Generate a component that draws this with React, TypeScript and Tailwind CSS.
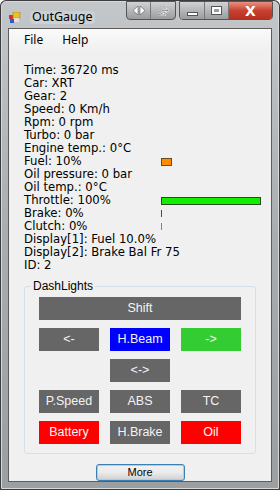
import React from "react";

const lines = [
  "Time: 36720 ms",
  "Car: XRT",
  "Gear: 2",
  "Speed: 0 Km/h",
  "Rpm: 0 rpm",
  "Turbo: 0 bar",
  "Engine temp.: 0°C",
  "Fuel: 10%",
  "Oil pressure: 0 bar",
  "Oil temp.: 0°C",
  "Throttle: 100%",
  "Brake: 0%",
  "Clutch: 0%",
  "Display[1]: Fuel 10.0%",
  "Display[2]: Brake Bal Fr 75",
  "ID: 2",
];

function Light({ label, color, className = "" }: { label: string; color: string; className?: string }) {
  return (
    <div
      className={`h-[23px] flex items-center justify-center text-[12.5px] text-[#f4f4f4] ${color} ${className}`}
      style={{ fontFamily: '"Liberation Sans", Arial, sans-serif' }}
    >
      {label}
    </div>
  );
}

function Bar({ i }: { i: number }) {
  if (i === 7) return <div className="w-[11px] h-[8px] bg-[#ff8c00] border border-[#6a4a20]" />;
  if (i === 10) return <div className="w-[100px] h-[8px] bg-[#11ee00] border border-[#2a4a2a]" />;
  if (i === 11) return <div className="w-[1px] h-[7px] bg-[#d01010]" />;
  if (i === 12) return <div className="w-[1px] h-[7px] bg-[#40a0a0]" />;
  return null;
}

export default function App() {
  return (
    <div className="w-[280px] h-[490px] bg-[#3c3c3c] p-px rounded-t-[6px]">
      <div className="w-full h-full flex flex-col bg-gradient-to-b from-[#c4c7ca] via-[#a9acaf] to-[#9c9fa2] rounded-t-[5px] border border-[#d8d8d8]">
        {/* title bar */}
        <div className="h-[26px] flex items-start relative">
          <div className="flex items-center mt-[9px] ml-[7px]">
            <svg width="12" height="11" viewBox="0 0 12 11">
              <rect x="0" y="3" width="4" height="4" fill="#d83030" />
              <rect x="4" y="0" width="7" height="6" fill="#f0c020" stroke="#b08010" strokeWidth="0.6" />
              <rect x="1" y="7" width="4" height="4" fill="#2060d0" />
              <rect x="5" y="6" width="5" height="4" fill="#e0e0e0" />
            </svg>
            <span
              className="ml-[9px] text-[12.5px] text-black leading-none px-[2px] bg-[#d6d8da]/60 rounded"
              style={{ fontFamily: '"Noto Sans", "Open Sans", sans-serif' }}
            >
              OutGauge
            </span>
          </div>
          <div className="absolute right-[5px] top-[-1px] flex gap-[3px]">
            <div className="flex h-[19px] border border-[#555] rounded-b-[4px] overflow-hidden bg-gradient-to-b from-[#d0d2d4] to-[#9a9c9e]">
              <div className="w-[24px] flex items-center justify-center border-r border-[#777]">
                <svg width="12" height="9" viewBox="0 0 12 9">
                  <path d="M5 0 L0 4.5 L5 9 Z M7 0 L12 4.5 L7 9 Z" fill="#fff" stroke="#555" strokeWidth="0.6" />
                </svg>
              </div>
              <div className="w-[24px] flex items-center justify-center">
                <svg width="12" height="11" viewBox="0 0 12 11">
                  <path d="M1 1 H8 V4 M8 7 V10 H1 Z M5 5.5 H11 M9 3.5 L11 5.5 L9 7.5" fill="none" stroke="#fff" strokeWidth="1.6" />
                  <path d="M1 1 H8 V4 M8 7 V10 H1 Z M5 5.5 H11 M9 3.5 L11 5.5 L9 7.5" fill="none" stroke="#555" strokeWidth="0.6" />
                </svg>
              </div>
            </div>
            <div className="flex h-[19px] border border-[#555] rounded-b-[4px] overflow-hidden">
              <div className="w-[25px] flex items-center justify-center border-r border-[#777] bg-gradient-to-b from-[#d0d2d4] to-[#9a9c9e]">
                <div className="w-[11px] h-[4px] bg-white border border-[#555] mt-[6px]" />
              </div>
              <div className="w-[24px] flex items-center justify-center border-r border-[#777] bg-gradient-to-b from-[#d0d2d4] to-[#9a9c9e]">
                <div className="w-[11px] h-[9px] bg-white border border-[#555] flex items-center justify-center">
                  <div className="w-[5px] h-[3px] bg-[#9a9c9e]" />
                </div>
              </div>
              <div className="w-[43px] flex items-center justify-center bg-gradient-to-b from-[#e89080] via-[#c84030] to-[#b83020]">
                <span className="text-white text-[14px] font-bold leading-none" style={{ fontFamily: '"DejaVu Sans", sans-serif' }}>
                  X
                </span>
              </div>
            </div>
          </div>
        </div>

        {/* client */}
        <div className="flex-1 mx-[6px] mb-[6px] border border-[#5c5c5c] bg-[#f0f0f0] flex flex-col">
          <div
            className="h-[22px] flex items-center gap-[19px] pl-[15px] text-[12px] text-black bg-gradient-to-b from-[#fafafa] to-[#f0f0f0]"
            style={{ fontFamily: '"Noto Sans", "Open Sans", sans-serif' }}
          >
            <span>File</span>
            <span>Help</span>
          </div>

          <div
            className="pl-[15px] pt-[13px] flex flex-col text-[11.7px] text-black"
            style={{ fontFamily: '"DejaVu Sans", Verdana, sans-serif' }}
          >
            {lines.map((t, i) => (
              <div key={i} className="h-[13px] leading-[13px] flex items-center">
                <span className="w-[137px] shrink-0 whitespace-nowrap">{t}</span>
                <Bar i={i} />
              </div>
            ))}
          </div>

          <div className="mx-[15px] mt-[14px] relative border border-[#d5dfe5] rounded-[3px] px-[14px] pt-[10px] pb-[9px] flex flex-col gap-[8px]">
            <span
              className="absolute -top-[8px] left-[6px] px-[2px] bg-[#f0f0f0] text-[12px] leading-[14px] text-black"
              style={{ fontFamily: '"Liberation Sans", Arial, sans-serif' }}
            >
              DashLights
            </span>
            <Light label="Shift" color="bg-[#666666]" className="h-[21px]" />
            <div className="grid grid-cols-3 gap-[11px]">
              <Light label="<-" color="bg-[#666666]" />
              <Light label="H.Beam" color="bg-[#0000ff]" />
              <Light label="->" color="bg-[#33cc33]" />
            </div>
            <div className="grid grid-cols-3 gap-[11px]">
              <div />
              <Light label="<->" color="bg-[#666666]" />
              <div />
            </div>
            <div className="grid grid-cols-3 gap-[11px]">
              <Light label="P.Speed" color="bg-[#666666]" />
              <Light label="ABS" color="bg-[#666666]" />
              <Light label="TC" color="bg-[#666666]" />
            </div>
            <div className="grid grid-cols-3 gap-[11px]">
              <Light label="Battery" color="bg-[#ff0000]" />
              <Light label="H.Brake" color="bg-[#666666]" />
              <Light label="Oil" color="bg-[#ff0000]" />
            </div>
          </div>

          <div className="flex justify-center mt-[10px]">
            <button
              className="w-[89px] h-[17px] rounded-[3px] border border-[#3c7fb1] bg-gradient-to-b from-[#f2f2f2] via-[#ebebeb] to-[#cfcfcf] text-[11px] leading-none text-black shadow-[inset_0_0_0_1px_#9fd3ee]"
              style={{ fontFamily: '"Liberation Sans", Arial, sans-serif' }}
            >
              More
            </button>
          </div>
        </div>
      </div>
    </div>
  );
}
